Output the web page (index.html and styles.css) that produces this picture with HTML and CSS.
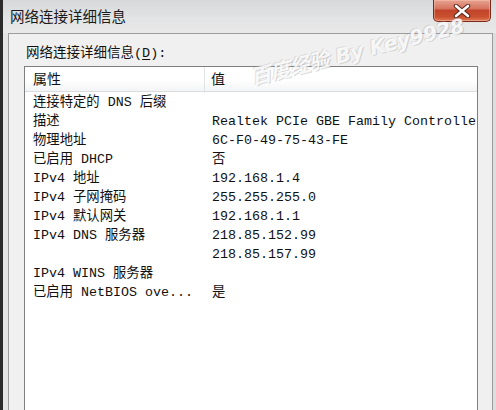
FILE: index.html
```html
<!DOCTYPE html>
<html lang="zh-CN">
<head>
    <meta charset="UTF-8">
    <title>网络连接详细信息</title>
    <link rel="stylesheet" href="styles.css">
</head>
<body>
    <div class="window">
        <div class="titlebar">
            <span class="title">网络连接详细信息</span>
            <div class="close-button" title="关闭">
                <svg width="18" height="14" viewBox="0 0 18 14">
                    <path d="M3 2 L15 12 M15 2 L3 12" stroke="#5a2418" stroke-width="4.5" stroke-linecap="round" fill="none"/>
                    <path d="M3 2 L15 12 M15 2 L3 12" stroke="#fff" stroke-width="2.6" stroke-linecap="round" fill="none"/>
                </svg>
            </div>
        </div>

        <div class="panel">
            <div class="panel-label">网络连接详细信息(<u>D</u>):</div>

            <div class="listview">
                <div class="list-header">
                    <div class="col col-name">属性</div>
                    <div class="col col-value">值</div>
                </div>
                <div class="list-body">
                    <div class="row"><span>连接特定的 DNS 后缀</span><span></span></div>
                    <div class="row"><span>描述</span><span>Realtek PCIe GBE Family Controlle</span></div>
                    <div class="row"><span>物理地址</span><span>6C-F0-49-75-43-FE</span></div>
                    <div class="row"><span>已启用 DHCP</span><span>否</span></div>
                    <div class="row"><span>IPv4 地址</span><span>192.168.1.4</span></div>
                    <div class="row"><span>IPv4 子网掩码</span><span>255.255.255.0</span></div>
                    <div class="row"><span>IPv4 默认网关</span><span>192.168.1.1</span></div>
                    <div class="row"><span>IPv4 DNS 服务器</span><span>218.85.152.99</span></div>
                    <div class="row"><span></span><span>218.85.157.99</span></div>
                    <div class="row"><span>IPv4 WINS 服务器</span><span></span></div>
                    <div class="row"><span>已启用 NetBIOS ove...</span><span>是</span></div>
                </div>
            </div>
        </div>

        <!-- watermark from the original screenshot -->
        <div class="watermark">百度经验 By Key9928</div>
    </div>
</body>
</html>
```

FILE: styles.css
```css
body {
    margin: 0;
    width: 496px;
    height: 410px;
    overflow: hidden;
    background: #e6e6e6;
}

.window {
    position: relative;
    height: 410px;
    box-sizing: border-box;
    border-left: 3px solid #2b2b2b;
    background: linear-gradient(to right, #e4e4e4, #ececec 60%, #dedede);
    font-family: "Liberation Mono", "Noto Sans CJK SC", monospace;
    font-size: 13.33px;
    color: #111;
    overflow: hidden;
}

.titlebar {
    height: 33px;
    display: flex;
    align-items: center;
    justify-content: space-between;
    padding: 0 5px 0 7px;
    background: linear-gradient(to bottom, #d6d8da, #e3e4e5 60%, #e9e9e9);
}

.title {
    font-family: "Noto Sans CJK SC", sans-serif;
    font-size: 14.5px;
    color: #1a1a1a;
    margin-top: -2px;
}

.close-button {
    align-self: flex-start;
    width: 56px;
    height: 21px;
    border: 1px solid #7a2a1c;
    border-top: none;
    border-radius: 0 0 5px 5px;
    background: linear-gradient(to bottom, #e7a493 0%, #d77560 40%, #c1442a 50%, #c9502f 80%, #e07a55 100%);
    display: flex;
    align-items: center;
    justify-content: center;
    box-shadow: inset 0 0 0 1px rgba(255, 200, 180, 0.45);
}

.panel {
    margin: 0 3px 0 5px;
    height: 380px;
    border: 1px solid #9c9c9c;
    background: #f0f0f0;
    padding: 10px 14px 0 15px;
}

.panel-label {
    height: 20px;
    line-height: 20px;
    padding-left: 2px;
    margin-bottom: 2px;
    font-size: 13.5px;
}

.panel-label u {
    text-underline-offset: 2px;
}

.listview {
    height: 360px;
    border: 1px solid #7f7f7f;
    background: #fff;
    overflow: hidden;
}

.list-header {
    display: grid;
    grid-template-columns: 180px 1fr;
    height: 24px;
    border-bottom: 1px solid #dcdcdc;
    background: linear-gradient(to bottom, #ffffff 55%, #f3f4f6);
}

.col {
    line-height: 26px;
    font-size: 14px;
}

.col-name {
    padding-left: 8px;
    border-right: 1px solid #e2e3e5;
}

.col-value {
    padding-left: 6px;
}

.list-body {
    padding-top: 1px;
}

.row {
    display: grid;
    grid-template-columns: 187px 1fr;
    height: 19px;
    line-height: 19px;
    white-space: nowrap;
}

.row span:first-child {
    padding-left: 8px;
}

.row span {
    overflow: hidden;
}

.watermark {
    position: absolute;
    top: 62px;
    left: 248px;
    font-family: "DejaVu Sans", "Noto Sans CJK SC", sans-serif;
    font-style: italic;
    font-weight: bold;
    font-size: 20px;
    color: rgba(255, 255, 255, 0.85);
    text-shadow: 1px 1px 0 rgba(160, 160, 160, 0.4), -1px -1px 0 rgba(170, 170, 170, 0.3);
    transform: rotate(-14deg);
    transform-origin: left center;
    white-space: nowrap;
    pointer-events: none;
}
```
